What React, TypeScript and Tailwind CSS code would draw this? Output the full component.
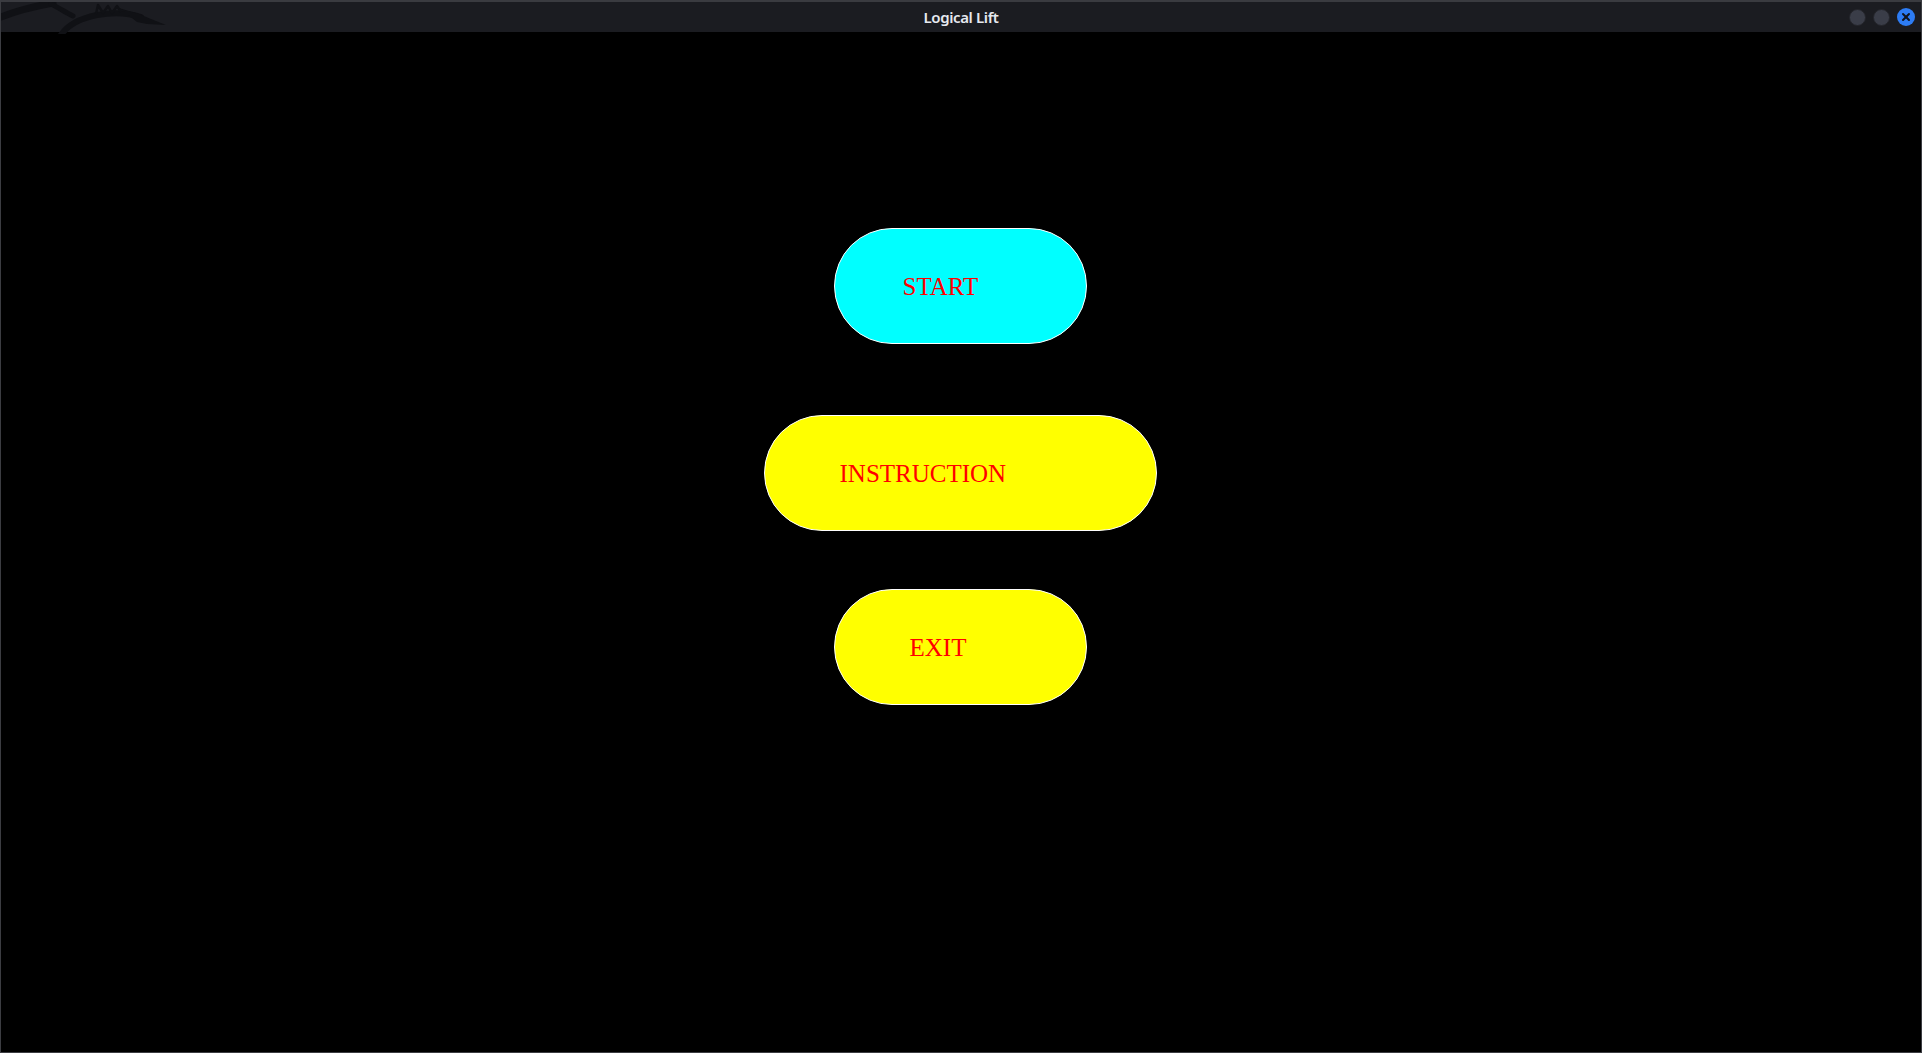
import { X } from 'lucide-react';

function DragonMark() {
  return (
    <svg width="170" height="32" viewBox="0 0 170 32" className="absolute left-0 top-0" fill="none">
      <path d="M0 15 C 15 9, 35 4, 52 1" stroke="#101115" strokeWidth="7" strokeLinecap="round" />
      <path d="M50 2 C 58 6, 64 10, 72 14" stroke="#101115" strokeWidth="5" strokeLinecap="round" />
      <path d="M60 33 C 66 24, 76 17, 96 13 C 112 10, 128 11, 140 15" stroke="#101115" strokeWidth="6" strokeLinecap="round" />
      <path d="M118 6 L138 12 L150 17 L165 23 L146 22 L136 20 Z" fill="#101115" />
      <path d="M95 12 L97 3 L102 11 L107 4 L111 11 L116 4 L120 10" stroke="#101115" strokeWidth="2.5" strokeLinejoin="round" />
    </svg>
  );
}

function MenuButton({ label, bg, width, pad }: { label: string; bg: string; width: string; pad: string }) {
  return (
    <div className={`${bg} ${width} ${pad} h-[116px] rounded-full border border-white flex items-center`}>
      <span className="text-[25px] leading-none text-[#ff0000]" style={{ fontFamily: '"Liberation Serif", "Times New Roman", serif' }}>
        {label}
      </span>
    </div>
  );
}

export default function App() {
  return (
    <div className="w-[1922px] h-[1053px] bg-black flex flex-col border-x border-b border-[#3c3d42] overflow-hidden">
      {/* title bar */}
      <div className="relative h-[32px] shrink-0 bg-[#1b1c21] border-t-2 border-[#3a3b40] flex items-center justify-center">
        <DragonMark />
        <span className="text-[15px] font-semibold text-[#e6e9ef] tracking-tight" style={{ fontFamily: '"Noto Sans", "Open Sans", sans-serif' }}>
          Logical Lift
        </span>
        <div className="absolute right-[6px] top-[6px] flex items-center gap-[7px]">
          <div className="w-[17px] h-[17px] rounded-full bg-[#3a3d48] border border-[#24252b]" />
          <div className="w-[17px] h-[17px] rounded-full bg-[#3a3d48] border border-[#24252b]" />
          <div className="w-[18px] h-[18px] rounded-full bg-[#2d7cf4] flex items-center justify-center">
            <X size={12} strokeWidth={4} color="#11141c" />
          </div>
        </div>
      </div>

      {/* menu */}
      <div className="flex flex-col items-center pt-[196px] pr-[2px]">
        <MenuButton label="START" bg="bg-[#00ffff]" width="w-[253px]" pad="pl-[68px]" />
        <div className="mt-[71px]">
          <MenuButton label="INSTRUCTION" bg="bg-[#ffff00]" width="w-[393px]" pad="pl-[75px]" />
        </div>
        <div className="mt-[58px]">
          <MenuButton label="EXIT" bg="bg-[#ffff00]" width="w-[253px]" pad="pl-[75px]" />
        </div>
      </div>
    </div>
  );
}
